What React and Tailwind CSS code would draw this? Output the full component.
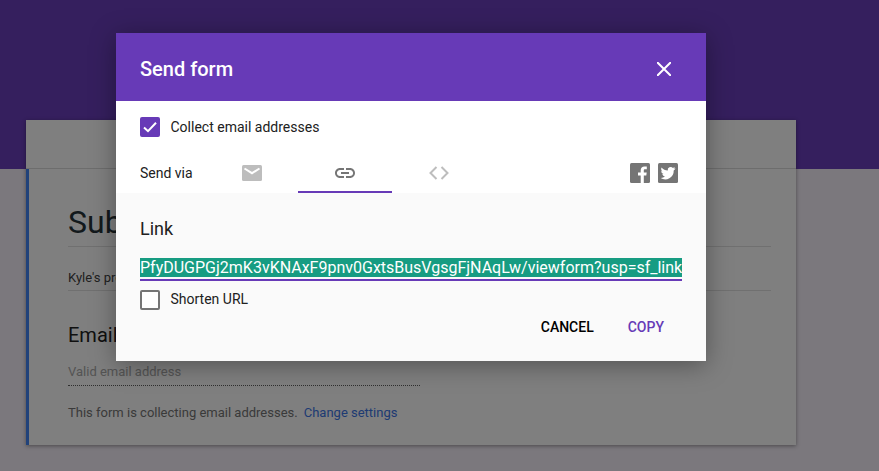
const FONT = "font-['Roboto','Liberation_Sans',sans-serif]";

function Check() {
  return (
    <span className="flex h-5 w-5 shrink-0 items-center justify-center rounded-[2px] bg-[#673ab7]">
      <svg width="14" height="14" viewBox="0 0 14 14" fill="none" stroke="#fff" strokeWidth="2"><path d="M1 7.500 5 11.200 13 2.800" /></svg>
    </span>
  );
}

function MailIcon() {
  return (
    <svg width="20" height="16" viewBox="0 0 20 16">
      <rect width="20" height="16" rx="1.5" fill="#bdbdbd" />
      <path d="M2.500 3.500 10 8.200l7.500-4.700" fill="none" stroke="#fff" strokeWidth="2" />
    </svg>
  );
}

function LinkIcon() {
  return (
    <svg width="24" height="24" viewBox="0 0 24 24" fill="#757575">
      <path d="M3.9 12c0-1.71 1.39-3.1 3.1-3.1h4V7H7c-2.76 0-5 2.24-5 5s2.24 5 5 5h4v-1.9H7c-1.71 0-3.1-1.39-3.1-3.1zM8 13h8v-2H8v2zm9-6h-4v1.9h4c1.71 0 3.1 1.39 3.1 3.1s-1.39 3.1-3.1 3.1h-4V17h4c2.76 0 5-2.24 5-5s-2.24-5-5-5z" />
    </svg>
  );
}

function CodeIcon() {
  return (
    <svg width="20" height="14" viewBox="0 0 20 14" fill="none" stroke="#bdbdbd" strokeWidth="2">
      <path d="M7.500 1 1.500 7l6 6M12.500 1l6 6-6 6" />
    </svg>
  );
}

function Fb() {
  return (
    <svg width="20" height="20" viewBox="0 0 20 20">
      <rect width="20" height="20" rx="1.500" fill="#757575" />
      <path d="M13.800 20v-7.600h2.500l.4-3h-2.900V7.600c0-.9.3-1.400 1.400-1.400h1.600V3.500c-.3 0-1.200-.1-2.300-.1-2.300 0-3.800 1.400-3.800 3.900v2.100H8v3h2.700V20z" fill="#fff" />
    </svg>
  );
}

function Tw() {
  return (
    <svg width="20" height="20" viewBox="0 0 20 20">
      <rect width="20" height="20" rx="1.500" fill="#757575" />
      <path d="M17.200 5.300c-.5.2-1.100.4-1.700.5.6-.4 1.100-1 1.300-1.700-.6.4-1.200.6-1.900.8a3 3 0 0 0-5.100 2.700C7.300 7.500 5.100 6.300 3.600 4.500c-.8 1.400-.4 3.100.9 4-.5 0-.9-.1-1.300-.4 0 1.500 1 2.700 2.400 3-.4.1-.9.1-1.300.1.4 1.200 1.500 2 2.800 2.100A6 6 0 0 1 2.600 15a8.500 8.500 0 0 0 13.100-7.500c.6-.4 1.100-.9 1.500-1.500z" fill="#fff" />
    </svg>
  );
}

export default function App() {
  return (
    <div className={`relative h-[471px] w-[879px] overflow-hidden bg-[#f6f0fa] ${FONT}`}>
      <div className="h-[169px] bg-[#6a3ebc]" />
      <div className="ml-[26px] -mt-[49px] h-[325px] w-[770px] bg-white shadow-[0_1px_4px_rgba(0,0,0,0.4)]">
        <div className="h-[49px] border-b border-[#dadada]" />
        <div className="h-[276px] border-l-[3px] border-[#4285f4] pl-[39px] pr-[25px]">
          <div className="flex h-[78px] items-end border-b border-[#e0e0e0] pb-[2px] text-[32px] leading-[44px] text-[#263238]">Subscribe</div>
          <div className="flex h-[44px] items-end border-b border-[#e0e0e0] pb-[3px] text-[13px] leading-[18px] text-[#424242]">Kyle's project newsletter</div>
          <div className="pt-[31px] text-[20px] leading-[27px] text-[#212121]">Email</div>
          <div className="mt-[14px] w-[352px] border-b border-dotted border-[#5f5f5f] pb-[4px] text-[13px] leading-[18px] text-[#a8a8a8]">Valid email address</div>
          <div className="mt-[18px] flex text-[13px] leading-[18px] text-[#757575]">
            <span>This form is collecting email addresses.</span>
            <span className="ml-[6px] text-[#3d76e6]">Change settings</span>
          </div>
        </div>
      </div>

      <div className="absolute inset-0 bg-black/50" />

      <div className="absolute left-[116px] top-[33px] w-[590px] bg-[#fafafa] shadow-[0_4px_24px_rgba(0,0,0,0.35)]">
        <div className="flex h-[68px] items-center justify-between bg-[#673ab7] pl-[24px] pr-[35px] pt-[4px]">
          <span className="text-[20px] font-medium text-white">Send form</span>
          <svg width="14" height="14" viewBox="0 0 14 14" stroke="#fff" strokeWidth="2"><path d="M0 0 14 14M14 0 0 14" /></svg>
        </div>
        <div className="bg-white px-[24px]">
          <div className="flex h-[52px] items-center gap-[10.5px] text-[14px] text-[#212121]">
            <Check />
            <span>Collect email addresses</span>
          </div>
          <div className="flex h-[40px] items-stretch">
            <span className="flex w-[64px] items-center text-[14px] text-[#212121]">Send via</span>
            <div className="flex w-[94px] items-center justify-center pl-[2px]"><MailIcon /></div>
            <div className="flex w-[94px] items-center justify-center border-y-2 border-t-transparent border-b-[#673ab7]"><LinkIcon /></div>
            <div className="flex w-[94px] items-center justify-center"><CodeIcon /></div>
            <div className="flex flex-1 items-center justify-end gap-[8px] pr-[4px]"><Fb /><Tw /></div>
          </div>
        </div>
        <div className="px-[24px] pb-[24px] pt-[24px]">
          <div className="text-[18px] leading-[24px] text-[#212121]">Link</div>
          <div className="mt-[17px] border-b-2 border-[#673ab7] pb-[2px]">
            <div className="h-[19px] overflow-hidden whitespace-nowrap bg-[#179c82] text-[16px] leading-[19px] text-white">PfyDUGPGj2mK3vKNAxF9pnv0GxtsBusVgsgFjNAqLw/viewform?usp=sf_link</div>
          </div>
          <div className="mt-[8px] flex items-center gap-[10.5px] text-[14px] text-[#212121]">
            <span className="h-5 w-5 shrink-0 rounded-[2px] border-2 border-[#757575] bg-white" />
            <span>Shorten URL</span>
          </div>
          <div className="mt-[7px] flex h-[20px] items-center justify-end gap-[34px] pr-[18px] text-[14px] font-medium">
            <span className="text-[#000]">CANCEL</span>
            <span className="text-[#673ab7]">COPY</span>
          </div>
        </div>
      </div>
    </div>
  );
}
